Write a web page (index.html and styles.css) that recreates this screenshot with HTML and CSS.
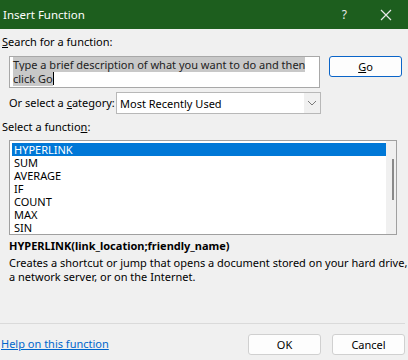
FILE: index.html
```html
<!DOCTYPE html>
<html lang="en">
<head>
    <meta charset="UTF-8">
    <title>Insert Function</title>
    <link rel="stylesheet" href="styles.css">
</head>
<body>
    <div class="dialog">
        <div class="titlebar">
            <span class="title">Insert Function</span>
            <span class="help">?</span>
            <svg class="close" width="12" height="12" viewBox="0 0 12 12">
                <path d="M1 1 L11 11 M11 1 L1 11" stroke="#e8e8e8" stroke-width="1.2" fill="none"/>
            </svg>
        </div>

        <div class="label searchLabel"><u>S</u>earch for a function:</div>
        <div class="searchRow">
            <div class="searchBox">
                <span class="selected">Type a brief description of what you want to do and then click Go</span><span class="caret"></span>
            </div>
            <span class="btn goBtn"><u>G</u>o</span>
        </div>

        <div class="categoryRow">
            <span class="label categoryLabel">Or select a <u>c</u>ategory:</span>
            <div class="select">
                <span class="selectText">Most Recently Used</span>
                <span class="selectArrow">
                    <svg width="10" height="6" viewBox="0 0 10 6">
                        <path d="M1 1 L5 5 L9 1" stroke="#7a7a7a" stroke-width="1" fill="none"/>
                    </svg>
                </span>
            </div>
        </div>

        <div class="label listLabel">Select a functio<u>n</u>:</div>
        <div class="listBox">
            <div class="items">
                <div class="item active">HYPERLINK</div>
                <div class="item">SUM</div>
                <div class="item">AVERAGE</div>
                <div class="item">IF</div>
                <div class="item">COUNT</div>
                <div class="item">MAX</div>
                <div class="item">SIN</div>
            </div>
            <div class="scrollTrack">
                <div class="thumb"></div>
            </div>
        </div>

        <div class="signature">HYPERLINK(link_location;friendly_name)</div>
        <div class="description">Creates a shortcut or jump that opens a document stored on your hard drive, a network server, or on the Internet.</div>

        <div class="footer">
            <a class="helpLink" href="#">Help on this function</a>
            <div class="buttons">
                <span class="btn">OK</span>
                <span class="btn">Cancel</span>
            </div>
        </div>
    </div>
</body>
</html>
```

FILE: styles.css
```css
body {
    margin: 0;
    background-color: #f0f0f0;
    font-family: "Noto Sans", "Open Sans", sans-serif;
    font-size: 11px;
    color: #000;
}
.dialog {
    width: 408px;
    height: 360px;
    display: flex;
    flex-direction: column;
}
.titlebar {
    height: 29px;
    background-color: #1d5e1e;
    color: #fff;
    display: flex;
    align-items: center;
    padding-left: 3px;
}
.title {
    flex-grow: 1;
    font-size: 11.5px;
}
.help {
    font-size: 12px;
    color: #e8e8e8;
    margin-right: 33px;
}
.close {
    margin-right: 16px;
}
.label {
    line-height: 16px;
}
.searchLabel {
    margin-top: 5px;
    padding-left: 2px;
}
.searchRow {
    display: flex;
    align-items: flex-start;
    gap: 9px;
    padding-left: 9px;
    margin-top: 6px;
}
.searchBox {
    width: 306px;
    height: 29px;
    background-color: #fff;
    border: 1px solid #a8a8a8;
    padding: 1px 0 0 3px;
    line-height: 14px;
    color: #222;
}
.selected {
    background-color: #c8c8c8;
}
.caret {
    display: inline-block;
    width: 1px;
    height: 13px;
    background-color: #000;
    vertical-align: -2px;
}
.btn {
    width: 71px;
    height: 19px;
    border: 1px solid #d0d0d0;
    border-radius: 3px;
    background-color: #fdfdfd;
    display: flex;
    justify-content: center;
    align-items: center;
}
.goBtn {
    border-color: #0a64c8;
}
.categoryRow {
    display: flex;
    align-items: center;
    padding-left: 9px;
    margin-top: 4px;
}
.categoryLabel {
    width: 107px;
}
.select {
    width: 203px;
    height: 20px;
    border: 1px solid #b8b8b8;
    background-color: #fff;
    display: flex;
    align-items: center;
}
.selectText {
    flex-grow: 1;
    padding-left: 3px;
}
.selectArrow {
    width: 16px;
    height: 20px;
    background-color: #f0f0f0;
    display: flex;
    justify-content: center;
    align-items: center;
}
.listLabel {
    margin-top: 5px;
    padding-left: 2px;
}
.listBox {
    margin: 5px 0 0 9px;
    width: 386px;
    height: 93px;
    border: 1px solid #a0a0a0;
    background-color: #fff;
    display: flex;
}
.items {
    flex-grow: 1;
    padding: 2px 0 0 2px;
}
.item {
    height: 13px;
    line-height: 13px;
    padding-left: 2px;
}
.item.active {
    background-color: #0078d7;
    color: #fff;
}
.scrollTrack {
    width: 10px;
    background-color: #f0f0f0;
    padding-top: 18px;
}
.thumb {
    width: 2px;
    height: 41px;
    margin-left: 6px;
    background-color: #8a8a8a;
}
.signature {
    font-weight: bold;
    padding-left: 9px;
    margin-top: 3px;
    line-height: 16px;
}
.description {
    padding-left: 9px;
    line-height: 14px;
    margin-top: 2px;
}
.footer {
    margin-top: auto;
    height: 36px;
    border-top: 1px solid #dadada;
    display: flex;
    align-items: center;
    justify-content: space-between;
    margin-right: 3px;
}
.helpLink {
    color: #0066cc;
    padding-left: 1px;
    margin-top: 2px;
}
.buttons {
    display: flex;
    gap: 11px;
    margin-top: 5px;
}
```
